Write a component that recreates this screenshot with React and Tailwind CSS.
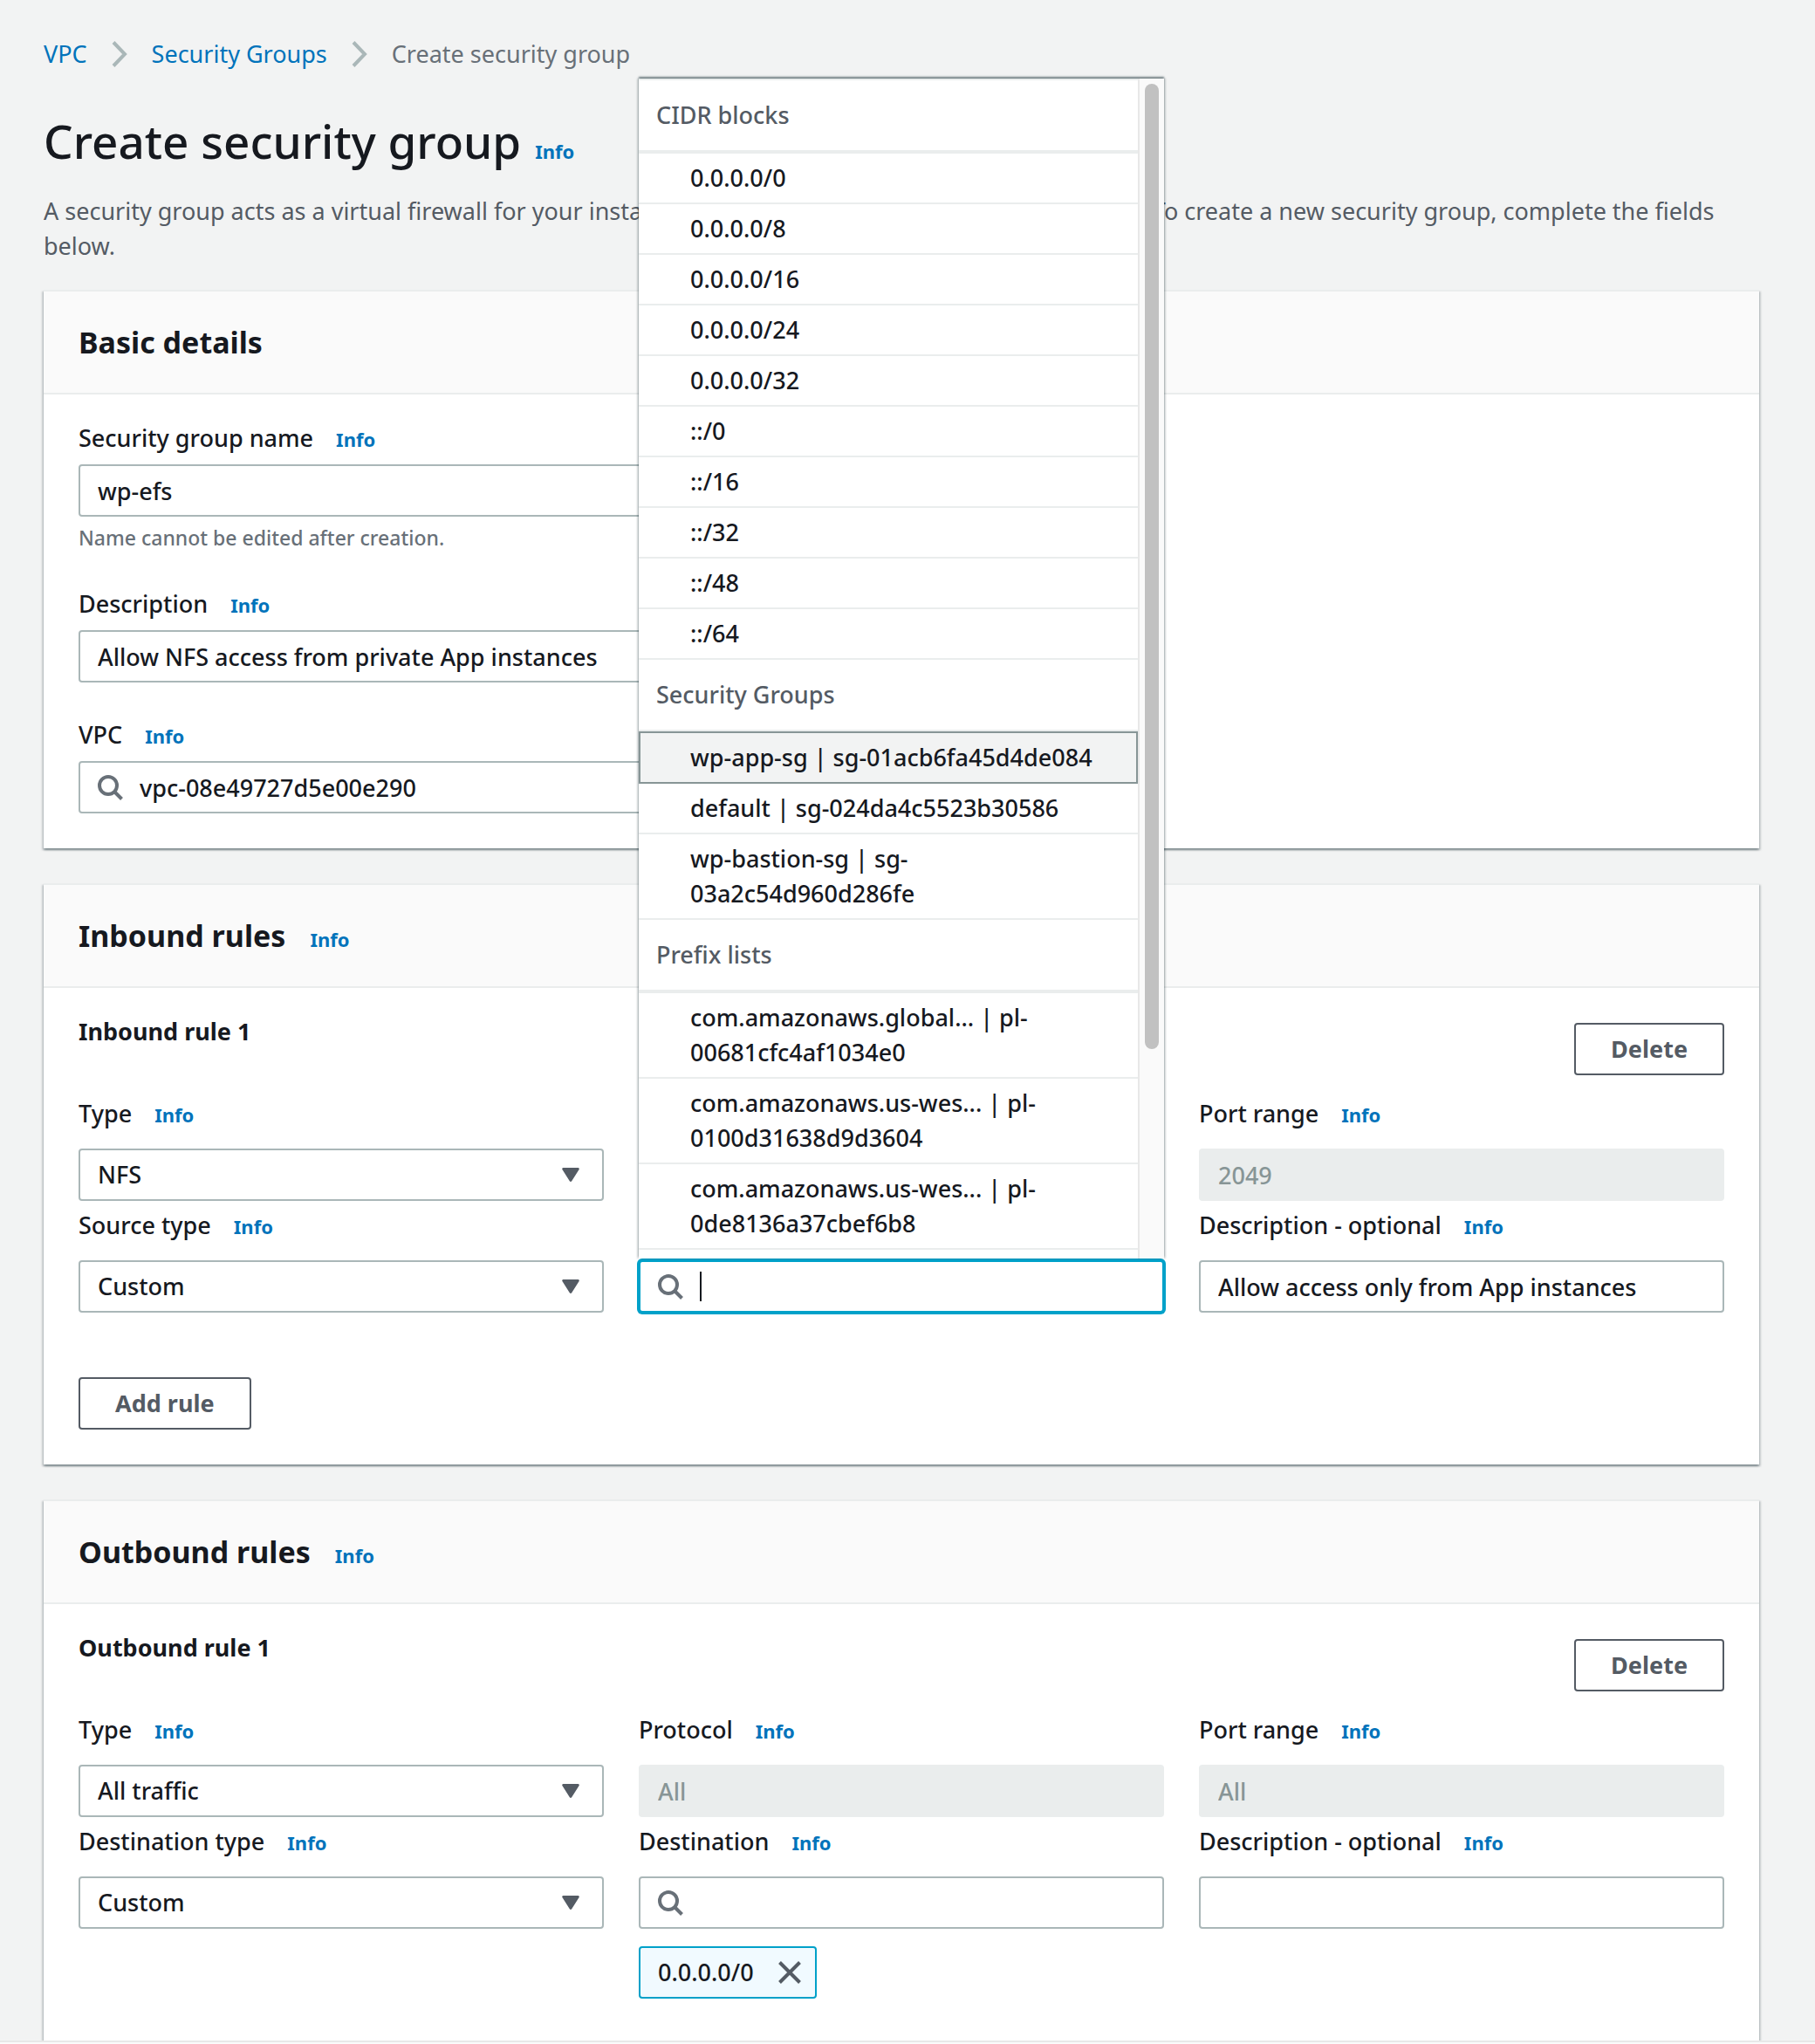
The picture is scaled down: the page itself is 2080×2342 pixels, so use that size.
import { useId } from "react";

const CARD =
  "border-t-2 border-[#eaeded] bg-white shadow-[0_2px_2px_0_rgba(0,28,36,0.3),2px_2px_2px_0_rgba(0,28,36,0.15),-2px_2px_2px_0_rgba(0,28,36,0.15)]";
const CONTROL =
  "block h-[60px] w-full appearance-none rounded-[4px] border-2 bg-white pr-5 text-[#16191f] outline-none";

const OPTION_GROUPS = [
  {
    title: "CIDR blocks",
    options: [
      "0.0.0.0/0",
      "0.0.0.0/8",
      "0.0.0.0/16",
      "0.0.0.0/24",
      "0.0.0.0/32",
      "::/0",
      "::/16",
      "::/32",
      "::/48",
      "::/64",
    ],
  },
  {
    title: "Security Groups",
    options: [
      "wp-app-sg | sg-01acb6fa45d4de084",
      "default | sg-024da4c5523b30586",
      "wp-bastion-sg | sg-03a2c54d960d286fe",
    ],
  },
  {
    title: "Prefix lists",
    options: [
      "com.amazonaws.global... | pl-00681cfc4af1034e0",
      "com.amazonaws.us-wes... | pl-0100d31638d9d3604",
      "com.amazonaws.us-wes... | pl-0de8136a37cbef6b8",
    ],
  },
];
const HIGHLIGHTED = "wp-app-sg | sg-01acb6fa45d4de084";

function Info() {
  return (
    <a href="#info" className="text-[22px] leading-8 font-bold text-[#0073bb]">
      Info
    </a>
  );
}

function Chevron() {
  return (
    <svg aria-hidden="true" className="h-[30px] w-[18px]" viewBox="0 0 18 30" fill="none" stroke="#aab7b8" strokeWidth="4">
      <path d="M2 1.5 15 15 2 28.5" />
    </svg>
  );
}

function SearchIcon() {
  return (
    <svg
      aria-hidden="true"
      className="pointer-events-none absolute top-4 left-[22px] size-[29px]"
      viewBox="0 0 29 29"
      fill="none"
      stroke="#687078"
      strokeWidth="4"
    >
      <circle cx="12" cy="12" r="10" />
      <path d="m19 19 8.5 8.5" />
    </svg>
  );
}

function Label({ id, children }) {
  return (
    <div className="flex h-10 items-baseline gap-[26px]">
      <label htmlFor={id}>{children}</label>
      <Info />
    </div>
  );
}

function TextField({ label, value, disabled, compact, hint }) {
  const id = useId();
  return (
    <div>
      <Label id={id}>{label}</Label>
      <input
        id={id}
        type="text"
        defaultValue={value}
        disabled={disabled}
        className={`${CONTROL} border-[#aab7b8] pl-5 disabled:border-[#eaeded] disabled:bg-[#eaeded] disabled:text-[#879596] ${compact ? "mt-[10px]" : "mt-5"}`}
      />
      {hint && <p className="mt-2 text-[23px] leading-8 text-[#687078]">{hint}</p>}
    </div>
  );
}

function SelectField({ label, value }) {
  const id = useId();
  return (
    <div>
      <Label id={id}>{label}</Label>
      <div className="relative mt-5">
        <select id={id} defaultValue={value} className={`${CONTROL} border-[#aab7b8] pl-5`}>
          <option>{value}</option>
        </select>
        <svg aria-hidden="true" className="pointer-events-none absolute top-[22px] right-7 h-4 w-5" viewBox="0 0 20 16">
          <path d="M1.5 0h17a1.3 1.3 0 0 1 1.1 2l-8.4 13.3a1.4 1.4 0 0 1-2.4 0L.4 2A1.3 1.3 0 0 1 1.5 0z" fill="#545b64" />
        </svg>
      </div>
    </div>
  );
}

function SearchField({ label, value, compact, open, children }) {
  const id = useId();
  return (
    <div>
      <Label id={id}>{label}</Label>
      <div className={`relative ${compact ? "mt-[10px]" : "mt-5"}`}>
        {open && <SourceMenu />}
        <input
          id={id}
          type="text"
          defaultValue={value}
          className={`${CONTROL} pl-[68px] ${open ? "border-[#00a1c9] caret-transparent shadow-[0_0_0_2px_#00a1c9]" : "border-[#aab7b8]"}`}
        />
        <SearchIcon />
        {open && <span className="absolute top-[13px] left-[70px] h-[34px] w-0.5 bg-[#16191f]" />}
      </div>
      {children}
    </div>
  );
}

function SourceMenu() {
  return (
    <div className="absolute inset-x-0 bottom-full mb-0.5 flex h-[1352px] overflow-hidden bg-white shadow-[0_-2px_2px_0_rgba(0,28,36,0.5),2px_0_2px_0_rgba(0,28,36,0.15),-2px_0_2px_0_rgba(0,28,36,0.15)]">
      <div role="listbox" aria-label="Source" className="min-w-0 flex-1 border-t-2 border-[#eaeded]">
        {OPTION_GROUPS.map((group) => (
          <div key={group.title} role="group" aria-label={group.title}>
            <div className="border-b-4 border-[#eaeded] p-5 text-[#545b64]">{group.title}</div>
            {group.options.map((option) => {
              const active = option === HIGHLIGHTED;
              return (
                <div
                  key={option}
                  role="option"
                  aria-selected={active}
                  className={
                    active
                      ? "-mt-0.5 border-2 border-[#879596] bg-[#f2f3f3] py-2 pr-8 pl-[57px]"
                      : "border-b-2 border-[#eaeded] py-2 pr-8 pl-[59px]"
                  }
                >
                  {option}
                </div>
              );
            })}
          </div>
        ))}
      </div>
      <div className="w-[30px] border-l-2 border-[#e8e8e8] bg-[#fafafa] px-1.5 pt-1.5">
        <div className="h-[1106px] w-4 rounded-full bg-[#c1c1c1]" />
      </div>
    </div>
  );
}

function Button({ children, className = "" }) {
  return (
    <button
      type="button"
      className={`h-[60px] rounded-[4px] border-2 border-[#545b64] bg-white px-10 font-bold text-[#545b64] ${className}`}
    >
      {children}
    </button>
  );
}

function Card({ title, info, className = "", children }) {
  return (
    <section className={CARD}>
      <header className="flex h-[118px] items-center border-b-2 border-[#eaeded] bg-[#fafafa] px-10">
        <div className="flex items-baseline gap-7">
          <h2 className="text-[34px] font-bold">{title}</h2>
          {info && <Info />}
        </div>
      </header>
      <div className={`px-10 pt-[30px] ${className}`}>{children}</div>
    </section>
  );
}

function Rule({ title, children }) {
  return (
    <>
      <div className="flex items-start justify-between">
        <h3 className="font-bold">{title}</h3>
        <Button className="mt-[10px]">Delete</Button>
      </div>
      <div className="mt-6 grid grid-cols-3 gap-x-10 gap-y-2">{children}</div>
    </>
  );
}

export default function App() {
  return (
    <div className="flex min-h-screen flex-col bg-[#f2f3f3] font-['Noto_Sans','Open_Sans',sans-serif] text-[27px] leading-10 font-medium text-[#16191f]">
      <main className="flex flex-1 flex-col pt-[42px] pr-16 pl-[50px]">
        <nav aria-label="Breadcrumb" className="flex items-center gap-7 font-normal">
          <a href="#vpc" className="text-[#0073bb]">VPC</a>
          <Chevron />
          <a href="#groups" className="text-[#0073bb]">Security Groups</a>
          <Chevron />
          <span className="text-[#687078]">Create security group</span>
        </nav>

        <div className="mt-11 flex items-baseline gap-4">
          <h1 className="text-[53px] leading-[72px] font-medium">Create security group</h1>
          <Info />
        </div>
        <p className="mt-6 font-normal text-[#545b64]">
          A security group acts as a virtual firewall for your instances to control inbound and outbound traffic. To
          create a new security group, complete the fields below.
        </p>

        <div className="mt-[30px] flex flex-col gap-10">
          <Card title="Basic details" className="pb-10">
            <div className="flex w-1/2 flex-col gap-10">
              <TextField compact label="Security group name" value="wp-efs" hint="Name cannot be edited after creation." />
              <TextField compact label="Description" value="Allow NFS access from private App instances" />
              <SearchField compact label="VPC" value="vpc-08e49727d5e00e290" />
            </div>
          </Card>

          <Card title="Inbound rules" info className="pb-10">
            <Rule title="Inbound rule 1">
              <SelectField label="Type" value="NFS" />
              <TextField label="Protocol" value="TCP" disabled />
              <TextField label="Port range" value="2049" disabled />
              <SelectField label="Source type" value="Custom" />
              <SearchField label="Source" open />
              <TextField label="Description - optional" value="Allow access only from App instances" />
            </Rule>
            <Button className="mt-[74px] block">Add rule</Button>
          </Card>

          <Card title="Outbound rules" info className="pb-12">
            <Rule title="Outbound rule 1">
              <SelectField label="Type" value="All traffic" />
              <TextField label="Protocol" value="All" disabled />
              <TextField label="Port range" value="All" disabled />
              <SelectField label="Destination type" value="Custom" />
              <SearchField label="Destination">
                <div className="mt-5 inline-flex h-[60px] items-center gap-7 rounded-[4px] border-2 border-[#00a1c9] bg-[#f1faff] pr-4 pl-5 align-top">
                  0.0.0.0/0
                  <button type="button" aria-label="Remove 0.0.0.0/0">
                    <svg className="size-[26px]" viewBox="0 0 26 26" fill="none" stroke="#545b64" strokeWidth="4">
                      <path d="m1.5 1.5 23 23m0-23-23 23" />
                    </svg>
                  </button>
                </div>
              </SearchField>
              <TextField label="Description - optional" value="" />
            </Rule>
          </Card>
        </div>
      </main>
      <footer className="relative h-1 border-t-2 border-[#e8e8e8] bg-[#fafafa]" />
    </div>
  );
}
